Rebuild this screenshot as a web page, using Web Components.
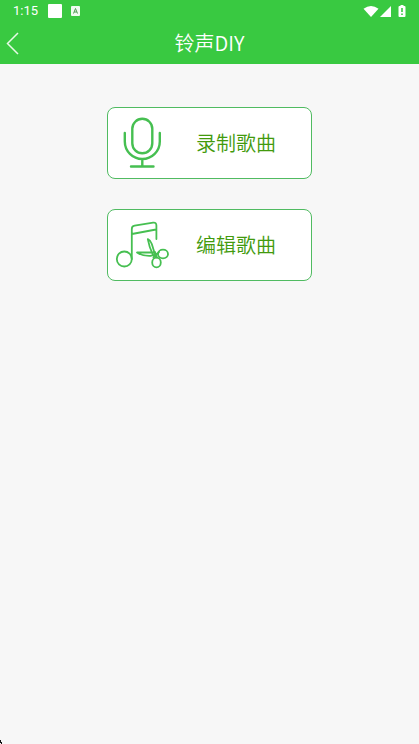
<!DOCTYPE html>
<html lang="zh-CN">
<head>
<meta charset="utf-8">
<meta name="viewport" content="width=device-width, initial-scale=1">
<title>铃声DIY</title>
<style>
html, body { height: 100%; }
body { margin: 0; background: #f7f7f7; font-family: "Noto Sans CJK SC", sans-serif; }
</style>
</head>
<body>
<ringtone-app>
  <status-bar slot="top">1:15</status-bar>
  <title-bar slot="top">铃声DIY</title-bar>
  <action-card>
    <mic-icon slot="icon"></mic-icon>录制歌曲
  </action-card>
  <action-card>
    <cut-icon slot="icon"></cut-icon>编辑歌曲
  </action-card>
</ringtone-app>
<script>
function define(name, markup) {
  const template = document.createElement('template');
  template.innerHTML = markup;
  customElements.define(name, class extends HTMLElement {
    constructor() {
      super();
      this.attachShadow({ mode: 'open' }).append(template.content.cloneNode(true));
    }
  });
}

define('ringtone-app', `
<style>
:host { display: flex; flex-direction: column; min-height: 100%; position: relative; }
header { background: #39c941; color: #fff; }
main { flex: 1; display: flex; flex-direction: column; align-items: center; gap: 30px; padding: 43px 16px; }
.mark { position: absolute; left: 0; bottom: 0; }
</style>
<header><slot name="top"></slot></header>
<main><slot></slot></main>
<svg class="mark" width="4" height="4" aria-hidden="true"><path d="M0 0h1v2h1v2H1V3H0z" fill="#111"/></svg>`);

define('status-bar', `
<style>
:host { display: flex; align-items: center; height: 22px; padding: 0 12px 0 13px; font: 13px/22px Roboto, sans-serif; }
svg { display: block; }
.app { margin-left: 10px; }
.lang { margin-left: 9px; }
.signals { margin-left: auto; }
</style>
<span><slot></slot></span>
<svg class="app" width="14" height="14"><rect width="14" height="14" rx="1" fill="#fff"/></svg>
<svg class="lang" width="9" height="10"><rect width="9" height="10" rx="1" fill="#f0fbf0"/><path d="M2.500 7.500l2-5 2 5M3.200 6h2.600" fill="none" stroke="#4d9b52"/></svg>
<svg class="signals" width="44" height="14" fill="#fff">
  <path d="M.5 4.800Q8 -1 15.500 4.800L8 13z"/>
  <path d="M28 2v11H17z"/>
  <path fill-rule="evenodd" d="M36.500 2h1V1h3v1h1q1 0 1 1v9q0 1-1 1h-5q-1 0-1-1V3q0-1 1-1zm1.700 2v4h1.600V4zm0 5.500v1.500h1.600V9.500z"/>
</svg>`);

define('title-bar', `
<style>
:host { display: grid; grid-template-columns: 40px 1fr 40px; align-items: center; height: 42px; }
button { display: flex; align-items: center; width: 40px; height: 42px; padding: 0 6px; border: 0; background: none; color: inherit; }
h1 { margin: 0; font-size: 20px; line-height: 42px; font-weight: 350; text-align: center; }
</style>
<button type="button" aria-label="返回"><svg width="14" height="24" fill="none" stroke="#e6fae6" stroke-width="1.500"><path d="M12 2 1.500 12.500 12 23"/></svg></button>
<h1><slot></slot></h1>`);

define('action-card', `
<style>
:host { display: block; width: 49%; min-width: 205px; }
button { box-sizing: border-box; width: 100%; height: 72px; padding: 0 35px 0 7px; display: flex; align-items: center; justify-content: space-between;
  border: 1px solid #50bb61; border-radius: 8px; background: #fff;
  color: #429a0c; font-family: inherit; font-size: 20px; line-height: 30px; font-weight: 350; }
</style>
<button type="button"><slot name="icon"></slot><span><slot></slot></span></button>`);

define('mic-icon', `
<style>:host { display: block; } svg { display: block; }</style>
<svg width="54" height="52" viewBox="115 117 54 52" fill="none" stroke="#46bf51" stroke-width="2.400" stroke-linecap="round">
  <rect x="132.300" y="118.800" width="20" height="34.500" rx="10"/>
  <path d="M124.800 133v8.500a17.500 17.500 0 0 0 35 0V133M142.300 159.500v7M131 166.500h22.500"/>
</svg>`);

define('cut-icon', `
<style>:host { display: block; } svg { display: block; }</style>
<svg width="54" height="52" viewBox="115 219 54 52" fill="none" stroke="#46bf51" stroke-width="1.800" stroke-linecap="round" stroke-linejoin="round">
  <circle cx="124.300" cy="259" r="7.500"/>
  <path d="M131.800 259V229q0-2.800 2.800-3.300l18.500-3q3.300-.5 3.300 2.800V239M132 234l24-4.500"/>
  <path d="M147.800 239.200q3 1.300 4 4.800l4 13-3-2.500q-3.500-7-5-15.300zM137 252.500h17l1.500 2-5 1.300q-8 .3-13.500-3.300zM153.500 257.500l5.500-5.500M155 252l2 5.500"/>
  <ellipse cx="163" cy="254" rx="5" ry="4.300"/>
  <ellipse cx="156.500" cy="262.500" rx="4.300" ry="4.800"/>
</svg>`);
</script>
</body>
</html>
